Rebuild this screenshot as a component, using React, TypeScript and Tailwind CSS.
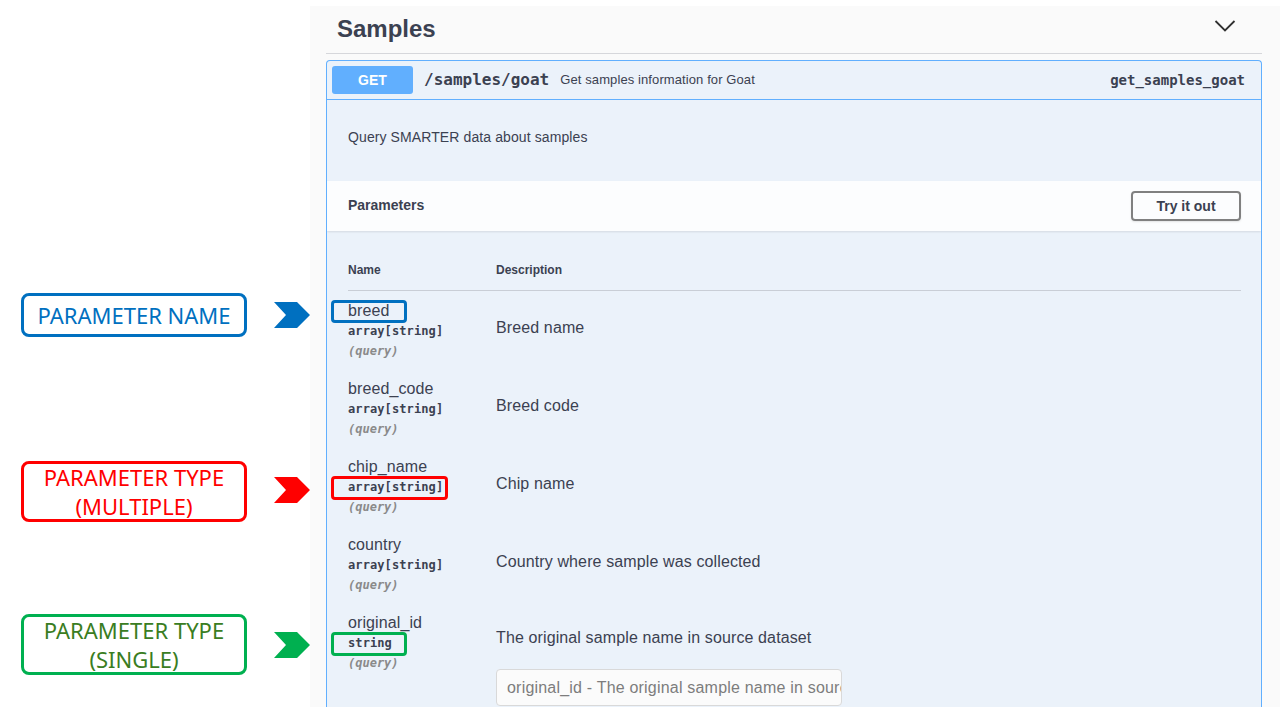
import React from "react";

const sans = { fontFamily: '"Liberation Sans", Arial, sans-serif' };
const mono = { fontFamily: '"DejaVu Sans Mono", "Liberation Mono", monospace' };
const anno = { fontFamily: '"Noto Sans", Inter, sans-serif' };

type Row = { name: string; type: string; desc: string; input?: string };

const rows: Row[] = [
  { name: "breed", type: "array[string]", desc: "Breed name" },
  { name: "breed_code", type: "array[string]", desc: "Breed code" },
  { name: "chip_name", type: "array[string]", desc: "Chip name" },
  { name: "country", type: "array[string]", desc: "Country where sample was collected" },
  {
    name: "original_id",
    type: "string",
    desc: "The original sample name in source dataset",
    input: "original_id - The original sample name in source dataset",
  },
];

function Chevron({ color, top }: { color: string; top: number }) {
  return (
    <svg
      className="absolute left-[274px]"
      style={{ top }}
      width="36"
      height="26"
      viewBox="0 0 36 26"
    >
      <polygon points="0,0 23,0 36,13 23,26 0,26 12,13" fill={color} />
    </svg>
  );
}

function ParamRow({ r }: { r: Row }) {
  return (
    <div className="flex h-[78px] shrink-0">
      <div className="w-[148px] shrink-0 pt-[10px]">
        <div className="text-[16px] leading-[20px] text-[#3b4151] tracking-[0.1px]" style={sans}>
          {r.name}
        </div>
        <div className="text-[12px] leading-[20px] font-bold text-[#3b4151] tracking-[0.1px]" style={mono}>
          {r.type}
        </div>
        <div className="text-[12px] leading-[20px] italic font-bold text-[#8a8a8a]" style={mono}>
          (query)
        </div>
      </div>
      <div className={r.input ? "pt-[25px]" : "pt-[27px]"}>
        <div className="text-[16px] leading-[20px] text-[#3b4151] tracking-[0.12px]" style={sans}>
          {r.desc}
        </div>
        {r.input && (
          <div className="mt-[21px] w-[346px] h-[37px] rounded-[4px] border border-[#d9d9d9] bg-[#fbfbfb] flex items-center px-[10px] overflow-hidden whitespace-nowrap">
            <span className="text-[16px] text-[#7d7d7d] tracking-[0.2px]" style={sans}>
              {r.input}
            </span>
          </div>
        )}
      </div>
    </div>
  );
}

export default function App() {
  return (
    <div className="relative w-[1280px] h-[720px] bg-white overflow-hidden" style={sans}>
      <div className="flex h-full pt-[6px] pb-[13px]">
        <div className="w-[310px] shrink-0" />
        <div className="flex-1 bg-[#fafafa] overflow-hidden pl-[16px] pr-[18px] flex flex-col">
          {/* section heading */}
          <div className="h-[48px] shrink-0 border-b border-[#d6d7db] flex items-center justify-between pl-[11px] pr-[26px]">
            <span className="text-[24px] font-bold text-[#3b4151] leading-none mb-[2px]">Samples</span>
            <svg width="22" height="14" viewBox="0 0 22 14" className="mb-[8px]">
              <path d="M1.5 2 L11 11.5 L20.5 2" fill="none" stroke="#303030" strokeWidth="1.8" />
            </svg>
          </div>

          {/* opblock */}
          <div className="mt-[6px] flex-1 rounded-t-[4px] border border-b-0 border-[#61affe] bg-[#ebf2fa] flex flex-col overflow-hidden">
            <div className="h-[39px] shrink-0 border-b border-[#61affe] flex items-center pl-[5px] pr-[16px]">
              <div className="w-[81px] h-[28px] rounded-[3px] bg-[#61affe] flex items-center justify-center text-white text-[14px] font-bold">
                GET
              </div>
              <span className="ml-[11px] text-[16px] font-bold text-[#3b4151]" style={mono}>
                /samples/goat
              </span>
              <span className="ml-[11px] text-[13px] text-[#3b4151] tracking-[0.1px]">Get samples information for Goat</span>
              <span className="ml-auto text-[14px] font-bold text-[#3b4151]" style={mono}>
                get_samples_goat
              </span>
            </div>

            <div className="h-[81px] shrink-0 pt-[29px] px-[21px]">
              <div className="text-[14px] leading-[16px] text-[#3b4151] tracking-[0.1px]">Query SMARTER data about samples</div>
            </div>

            <div className="h-[50px] shrink-0 bg-[#fcfdfe] shadow-[0_1px_2px_rgba(0,0,0,0.1)] flex items-center justify-between pl-[21px] pr-[20px]">
              <span className="text-[14px] font-bold text-[#3b4151] mb-[1px]">Parameters</span>
              <div className="w-[110px] h-[30px] rounded-[4px] border-2 border-[#808080] flex items-center justify-center text-[14px] font-bold text-[#3b4151] shadow-[0_1px_2px_rgba(0,0,0,0.1)]">
                Try it out
              </div>
            </div>

            <div className="pl-[21px] pr-[20px] pt-[31px] flex flex-col">
              <div className="flex pb-[12px] border-b border-[#c9ced6] text-[12px] leading-[16px] font-bold text-[#3b4151]">
                <div className="w-[148px]">Name</div>
                <div>Description</div>
              </div>
              {rows.map((r) => (
                <ParamRow key={r.name} r={r} />
              ))}
            </div>
          </div>
        </div>
      </div>

      {/* annotation layer */}
      <div className="absolute left-[21px] top-[293px] w-[226px] h-[44px] rounded-[8px] border-[3px] border-[#0070c0] bg-white flex items-center justify-center text-[22px] leading-[29px] text-[#0070c0]" style={anno}>
        PARAMETER NAME
      </div>
      <div className="absolute left-[21px] top-[461px] w-[226px] h-[61px] rounded-[8px] border-[3px] border-[#ff0000] bg-white flex flex-col items-center justify-center text-[22px] leading-[29px] text-[#ff0000]" style={anno}>
        <span>PARAMETER TYPE</span>
        <span>(MULTIPLE)</span>
      </div>
      <div className="absolute left-[21px] top-[614px] w-[226px] h-[61px] rounded-[8px] border-[3px] border-[#00b050] bg-white flex flex-col items-center justify-center text-[22px] leading-[29px] text-[#3a7d22]" style={anno}>
        <span>PARAMETER TYPE</span>
        <span>(SINGLE)</span>
      </div>

      <Chevron color="#0070c0" top={302} />
      <Chevron color="#ff0000" top={477} />
      <Chevron color="#00b050" top={632} />

      <div className="absolute left-[331px] top-[300px] w-[76px] h-[23px] rounded-[4px] border-[3px] border-[#0070c0]" />
      <div className="absolute left-[331px] top-[476px] w-[117px] h-[24px] rounded-[4px] border-[3px] border-[#ff0000]" />
      <div className="absolute left-[331px] top-[632px] w-[76px] h-[24px] rounded-[4px] border-[3px] border-[#00b050]" />
    </div>
  );
}
